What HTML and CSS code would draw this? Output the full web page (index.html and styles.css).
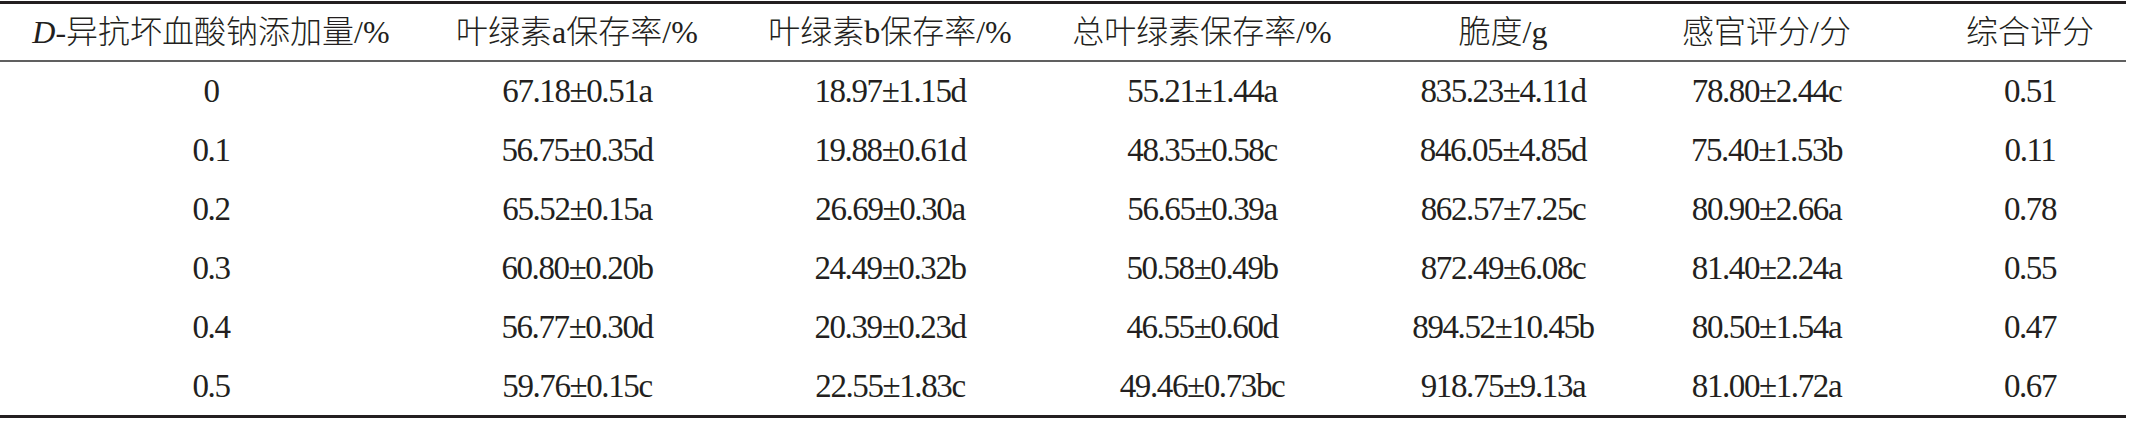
FILE: index.html
```html
<!DOCTYPE html>
<html lang="zh-CN">
<head>
  <meta charset="UTF-8" />
  <meta name="viewport" content="width=device-width, initial-scale=1.0"/>
  <title>D-异抗坏血酸钠添加量</title>
  <link rel="stylesheet" href="styles.css">
</head>
<body>
  <table class="data">
    <colgroup>
      <col class="c1"><col class="c2"><col class="c3"><col class="c4"><col class="c5"><col class="c6"><col class="c7">
    </colgroup>
    <thead>
      <tr>
        <th><i>D</i>-异抗坏血酸钠添加量/%</th>
        <th>叶绿素a保存率/%</th>
        <th>叶绿素b保存率/%</th>
        <th>总叶绿素保存率/%</th>
        <th>脆度/g</th>
        <th>感官评分/分</th>
        <th>综合评分</th>
      </tr>
    </thead>
    <tbody>
      <tr><td>0</td><td>67.18±0.51a</td><td>18.97±1.15d</td><td>55.21±1.44a</td><td>835.23±4.11d</td><td>78.80±2.44c</td><td>0.51</td></tr>
      <tr><td>0.1</td><td>56.75±0.35d</td><td>19.88±0.61d</td><td>48.35±0.58c</td><td>846.05±4.85d</td><td>75.40±1.53b</td><td>0.11</td></tr>
      <tr><td>0.2</td><td>65.52±0.15a</td><td>26.69±0.30a</td><td>56.65±0.39a</td><td>862.57±7.25c</td><td>80.90±2.66a</td><td>0.78</td></tr>
      <tr><td>0.3</td><td>60.80±0.20b</td><td>24.49±0.32b</td><td>50.58±0.49b</td><td>872.49±6.08c</td><td>81.40±2.24a</td><td>0.55</td></tr>
      <tr><td>0.4</td><td>56.77±0.30d</td><td>20.39±0.23d</td><td>46.55±0.60d</td><td>894.52±10.45b</td><td>80.50±1.54a</td><td>0.47</td></tr>
      <tr><td>0.5</td><td>59.76±0.15c</td><td>22.55±1.83c</td><td>49.46±0.73bc</td><td>918.75±9.13a</td><td>81.00±1.72a</td><td>0.67</td></tr>
    </tbody>
  </table>
</body>
</html>
```

FILE: styles.css
```css
body {
  margin: 0;
  background: #fff;
  color: #231f20;
  font-family: "Liberation Serif", "Noto Sans CJK SC", serif;
}
.data {
  width: 2126px;
  margin-top: 1px;
  table-layout: fixed;
  border-collapse: separate;
  border-spacing: 0;
}
.c1 { width: 394px; }
.c2 { width: 339px; }
.c3 { width: 313px; }
.c4 { width: 306px; }
.c5 { width: 283px; }
.c6 { width: 263px; }
.c7 { width: 228px; }
.data th,
.data td {
  padding: 0;
  text-align: center;
  white-space: nowrap;
  box-sizing: border-box;
}
.data th {
  font-size: 32px;
  font-weight: 300;
  line-height: 56px;
  border-top: 3px solid #231f20;
  border-bottom: 2px solid #606060;
}
.data th i {
  font-weight: normal;
}
.data td {
  font-size: 33px;
  letter-spacing: -1.4px;
  line-height: 59px;
}
.data tbody tr:last-child td {
  line-height: 58px;
  border-bottom: 3px solid #231f20;
}
/* nudge column centres to where the printed table puts them */
.data tr > :nth-child(1) { padding-left: 28px; }
.data tr > :nth-child(2) { padding-left: 27px; }
.data tr > :nth-child(3) { padding-left: 1px; }
.data tr > :nth-child(4) { padding-left: 6px; }
.data tr > :nth-child(5) { padding-left: 19px; }
.data tr > :nth-child(7) { padding-left: 36px; }
```
